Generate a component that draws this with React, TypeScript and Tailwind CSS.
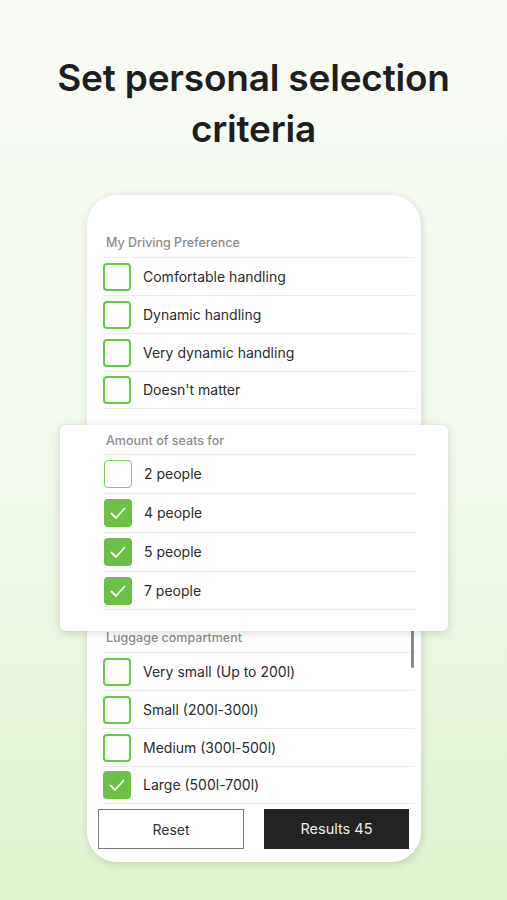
import React from "react";

const Check = () => (
  <svg width="28" height="28" viewBox="0 0 28 28" fill="none">
    <polyline points="7.5,14.5 12,19 20.5,9.5" stroke="white" strokeWidth="1.8" strokeLinecap="round" strokeLinejoin="round" />
  </svg>
);

function Box({ checked, light }: { checked?: boolean; light?: boolean }) {
  if (checked) {
    return (
      <div className="w-[28px] h-[28px] rounded-[4px] bg-[#6cc046] flex items-center justify-center shrink-0">
        <Check />
      </div>
    );
  }
  return (
    <div
      className={
        light
          ? "w-[28px] h-[28px] rounded-[4px] border-[1.5px] border-[#7fcc63] bg-white shrink-0"
          : "w-[28px] h-[28px] rounded-[4px] border-2 border-[#66c944] bg-white shrink-0"
      }
    />
  );
}

function Row({ label, checked, last, tall, light }: { label: string; checked?: boolean; last?: boolean; tall?: boolean; light?: boolean }) {
  return (
    <div
      className={
        (tall ? "h-[39px] " : "h-[38px] ") +
        "flex items-center border-t border-[#ececec] " +
        (last ? "border-b" : "")
      }
    >
      <Box checked={checked} light={light} />
      <span className="ml-[12px] text-[14px] text-[#2b2b2b] leading-none">{label}</span>
    </div>
  );
}

export default function App() {
  return (
    <div
      className="relative w-[507px] h-[900px] overflow-hidden bg-gradient-to-b from-[#f8fbf5] via-[#f1f9ec] to-[#dff3cf]"
      style={{ fontFamily: "Inter, 'Noto Sans', sans-serif" }}
    >
      <h1 className="pt-[52px] text-center text-[37px] leading-[51px] font-semibold text-[#1e1e1e] tracking-[-0.2px]">
        Set personal selection
        <br />
        criteria
      </h1>

      <div className="relative mt-[41px] ml-[87px] w-[334px] h-[667px] rounded-[30px] bg-white shadow-[1px_2px_8px_rgba(0,0,0,0.14)] flex flex-col">
        <div className="pt-[40px] pl-[16px] pr-[6px]">
          <div className="pl-[3px] text-[12.5px] leading-[16px] font-medium text-[#8c8c8c]">My Driving Preference</div>
          <div className="mt-[6px]">
            <Row label="Comfortable handling" />
            <Row label="Dynamic handling" />
            <Row label="Very dynamic handling" />
            <Row label="Doesn't matter" last />
          </div>
        </div>
        <div className="h-[221px] shrink-0" />
        <div className="pl-[16px] pr-[6px]">
          <div className="pl-[3px] text-[12.5px] leading-[16px] font-medium text-[#8c8c8c]">Luggage compartment</div>
          <div className="mt-[6px]">
            <Row label="Very small (Up to 200l)" />
            <Row label="Small (200l-300l)" />
            <Row label="Medium (300l-500l)" />
            <Row label="Large (500l-700l)" checked last />
          </div>
        </div>
        <div className="mt-[5px] px-[11px] flex gap-[20px]">
          <button className="w-[146px] h-[40px] border border-[#7a7a7a] bg-white text-[14px] text-[#333]">Reset</button>
          <button className="w-[145px] h-[40px] bg-[#232323] text-[14.5px] text-[#ededed]">Results 45</button>
        </div>
        <div className="absolute left-[324px] top-[433px] w-[3px] h-[40px] rounded-full bg-[#8a8a8a]" />
      </div>

      <div className="absolute left-[60px] top-[425px] w-[388px] h-[206px] rounded-[6px] bg-white shadow-[0_2px_10px_rgba(0,0,0,0.15)] pt-[8px] pl-[44px] pr-[32px]">
        <div className="pl-[2px] text-[12.5px] leading-[16px] font-medium text-[#8c8c8c]">Amount of seats for</div>
        <div className="mt-[5px]">
          <Row label="2 people" tall light />
          <Row label="4 people" tall checked />
          <Row label="5 people" tall checked />
          <Row label="7 people" tall checked last />
        </div>
      </div>
    </div>
  );
}
